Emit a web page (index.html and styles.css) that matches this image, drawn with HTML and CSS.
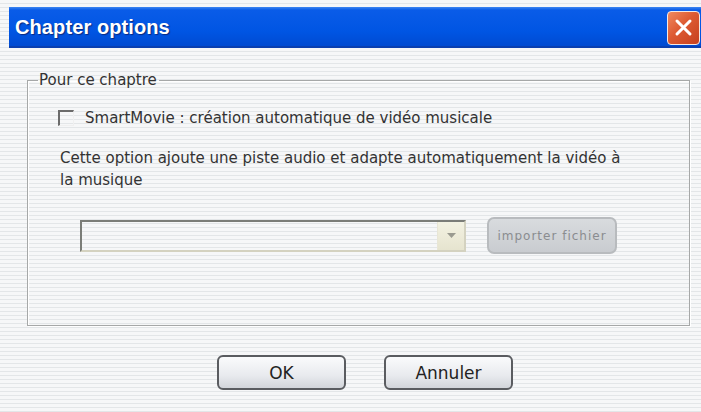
FILE: index.html
```html
<!DOCTYPE html>
<html>
<head>
<meta charset="utf-8">
<link rel="stylesheet" href="styles.css">
</head>
<body>
<div class="dialog">
  <div class="titlebar">
    <span class="title">Chapter options</span>
    <span class="close">
      <svg width="21" height="21" viewBox="0 0 21 21"><path d="M4 4 L17 17 M17 4 L4 17" stroke="#fff" stroke-width="3" stroke-linecap="round"/></svg>
    </span>
  </div>
  <div class="content">
    <fieldset class="group">
      <legend>Pour ce chaptre</legend>
      <div class="check-row">
        <span class="checkbox"></span>
        <span class="check-label">SmartMovie : création automatique de vidéo musicale</span>
      </div>
      <p class="desc">Cette option ajoute une piste audio et adapte automatiquement la vidéo à<br>la musique</p>
      <div class="combo-row">
        <div class="combo">
          <span class="combo-btn"><svg width="9" height="5" viewBox="0 0 9 5"><path d="M0 0 H9 L4.5 5 Z" fill="#9a9a90"/></svg></span>
        </div>
        <span class="import-btn">importer fichier</span>
      </div>
    </fieldset>
    <div class="buttons">
      <span class="btn">OK</span>
      <span class="btn">Annuler</span>
    </div>
  </div>
</div>
</body>
</html>
```
FILE: styles.css
```css
html, body {
  margin: 0;
  padding: 0;
}
body {
  width: 701px;
  height: 412px;
  overflow: hidden;
  background: repeating-linear-gradient(to bottom, #f6f7f8 0 3px, #e3e6e8 3px 4px);
  font-family: "DejaVu Sans", Tahoma, sans-serif;
}
.dialog {
  padding: 7px 0 0 9px;
}
.titlebar {
  height: 41px;
  display: flex;
  align-items: center;
  justify-content: space-between;
  background: linear-gradient(to bottom, #3d86f0 0, #0a5ce8 3px, #0055e3 60%, #0049cf 100%);
  box-shadow: inset 0 -2px 0 #0a3fb0;
}
.title {
  padding-left: 6px;
  color: #fff;
  font-family: "Liberation Sans", Arial, sans-serif;
  font-weight: bold;
  font-size: 20px;
  letter-spacing: 0.1px;
  text-shadow: 1px 1px 1px #0a2a80;
}
.close {
  width: 31px;
  height: 32px;
  margin-right: 1px;
  border: 1px solid #f4e9e4;
  border-radius: 4px;
  background: linear-gradient(135deg, #f08a60 0, #dd5a32 45%, #c6401e 100%);
  display: flex;
  align-items: center;
  justify-content: center;
  box-sizing: content-box;
}
.content {
  padding: 0 0 0 18px;
}
.group {
  margin: 23px 0 0 0;
  width: 663px;
  height: 255px;
  box-sizing: border-box;
  padding: 0;
  border: 1px solid #a6a8a8;
  box-shadow: 1px 1px 0 #ffffff, inset 1px 1px 0 #ffffff;
}
.group legend {
  margin-left: 10px;
  padding: 0 2px 0 1px;
  font-size: 15px;
  color: #333;
  line-height: 18px;
}
.check-row {
  display: flex;
  align-items: center;
  margin: 20px 0 0 30px;
}
.checkbox {
  width: 13px;
  height: 13px;
  border-top: 2px solid #6b6b6b;
  border-left: 2px solid #6b6b6b;
  border-right: 1px solid #f0f0f0;
  border-bottom: 1px solid #f0f0f0;
}
.check-label {
  margin-left: 11px;
  font-size: 15px;
  color: #333;
}
.desc {
  margin: 20px 0 0 32px;
  font-size: 15px;
  line-height: 22px;
  color: #333;
}
.combo-row {
  display: flex;
  align-items: center;
  margin: 26px 0 0 52px;
}
.combo {
  width: 386px;
  height: 32px;
  box-sizing: border-box;
  border-top: 2px solid #7b7d78;
  border-left: 2px solid #7b7d78;
  border-right: 2px solid #d4d2c0;
  border-bottom: 2px solid #d4d2c0;
  display: flex;
  justify-content: flex-end;
  align-items: stretch;
}
.combo-btn {
  width: 26px;
  background: linear-gradient(to bottom, #f3f2e2, #e6e4cf);
  border-left: 1px solid #e8e6d6;
  display: flex;
  align-items: center;
  justify-content: center;
}
.import-btn {
  margin-left: 21px;
  width: 130px;
  height: 37px;
  box-sizing: border-box;
  border: 2px solid #b8bbbe;
  border-radius: 7px;
  background: linear-gradient(to bottom, #d8dbde, #c9ccd0);
  color: #8a8c90;
  font-size: 12px;
  letter-spacing: 1px;
  display: flex;
  align-items: center;
  justify-content: center;
}
.buttons {
  display: flex;
  gap: 38px;
  margin: 29px 0 0 190px;
}
.btn {
  width: 129px;
  height: 35px;
  box-sizing: border-box;
  border: 2px solid #5a5c60;
  border-radius: 6px;
  background: linear-gradient(to bottom, #fafbfc 0, #e8eaee 60%, #d2d5da 100%);
  color: #222;
  font-size: 17px;
  display: flex;
  align-items: center;
  justify-content: center;
}
```
